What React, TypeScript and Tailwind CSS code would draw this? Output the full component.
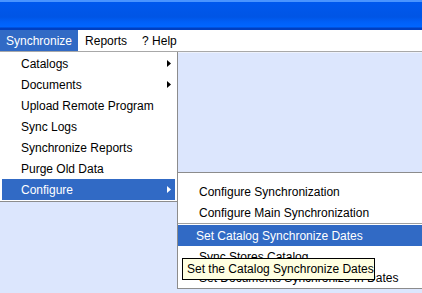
const font = { fontFamily: '"Liberation Sans", Arial, sans-serif' };

function Arrow({ white }: { white?: boolean }) {
  return (
    <svg width="4" height="7" viewBox="0 0 4 7" className="shrink-0">
      <path d="M0 0 L4 3.5 L0 7 Z" fill={white ? "#ffffff" : "#000000"} />
    </svg>
  );
}

function Item({
  label,
  sub,
  active,
}: {
  label: string;
  sub?: boolean;
  active?: boolean;
}) {
  return (
    <div
      className={`flex h-[21px] items-center justify-between pl-[19px] pr-[4px] ${
        active ? "bg-[#316ac5] text-white" : "text-black"
      }`}
    >
      <span>{label}</span>
      {sub && <Arrow white={active} />}
    </div>
  );
}

export default function App() {
  return (
    <div
      className="relative h-[293px] w-[422px] overflow-hidden bg-[#dce6fd] text-[12px] leading-none"
      style={font}
    >
      {/* Title bar */}
      <div className="h-[30px] bg-[linear-gradient(to_bottom,#4a94ff_0px,#4a94ff_2px,#0058ee_2px,#0055e5_17px,#0060f8_22px,#0066ff_27px,#003fc0_28px,#003fc0_30px)]" />

      {/* Menu bar */}
      <div className="flex h-[21px] items-center bg-white text-black">
        <div className="flex h-full items-center bg-[#316ac5] px-[6px] text-white">
          Synchronize
        </div>
        <div className="px-[7px]">Reports</div>
        <div className="px-[8px]">? Help</div>
      </div>
      <div className="h-px bg-[#a8a8a8]" />
      <div className="h-px bg-[#eef2fc]" />

      {/* Synchronize dropdown */}
      <div className="absolute left-0 top-[52px] w-[178px] border-r border-b border-[#8c8c8c] bg-white py-px pl-[2px] pr-[2px]">
        <Item label="Catalogs" sub />
        <Item label="Documents" sub />
        <Item label="Upload Remote Program" />
        <Item label="Sync Logs" />
        <Item label="Synchronize Reports" />
        <Item label="Purge Old Data" />
        <Item label="Configure" sub active />
      </div>

      {/* Configure submenu */}
      <div className="absolute left-[177px] top-[172px] w-[250px] border border-[#8c8c8c] bg-white pt-[8px]">
        <div className="flex h-[21px] items-center pl-[21px]">Configure Synchronization</div>
        <div className="flex h-[21px] items-center pl-[21px]">Configure Main Synchronization</div>
        <div className="h-px bg-[#a0a0a0]" />
        <div className="h-px bg-white" />
        <div className="flex h-[21px] items-center bg-[#316ac5] pl-[18px] text-white">
          Set Catalog Synchronize Dates
        </div>
        <div className="flex h-[21px] items-center pl-[21px]">Sync Stores Catalog</div>
        <div className="flex h-[21px] items-center pl-[21px]">Set Documents Synchronize In Dates</div>
      </div>

      {/* Tooltip */}
      <div className="absolute left-[182px] top-[258px] flex h-[22px] w-[193px] items-center border border-black bg-[#ffffe1] pl-[4px] text-black">
        Set the Catalog Synchronize Dates
      </div>
    </div>
  );
}
